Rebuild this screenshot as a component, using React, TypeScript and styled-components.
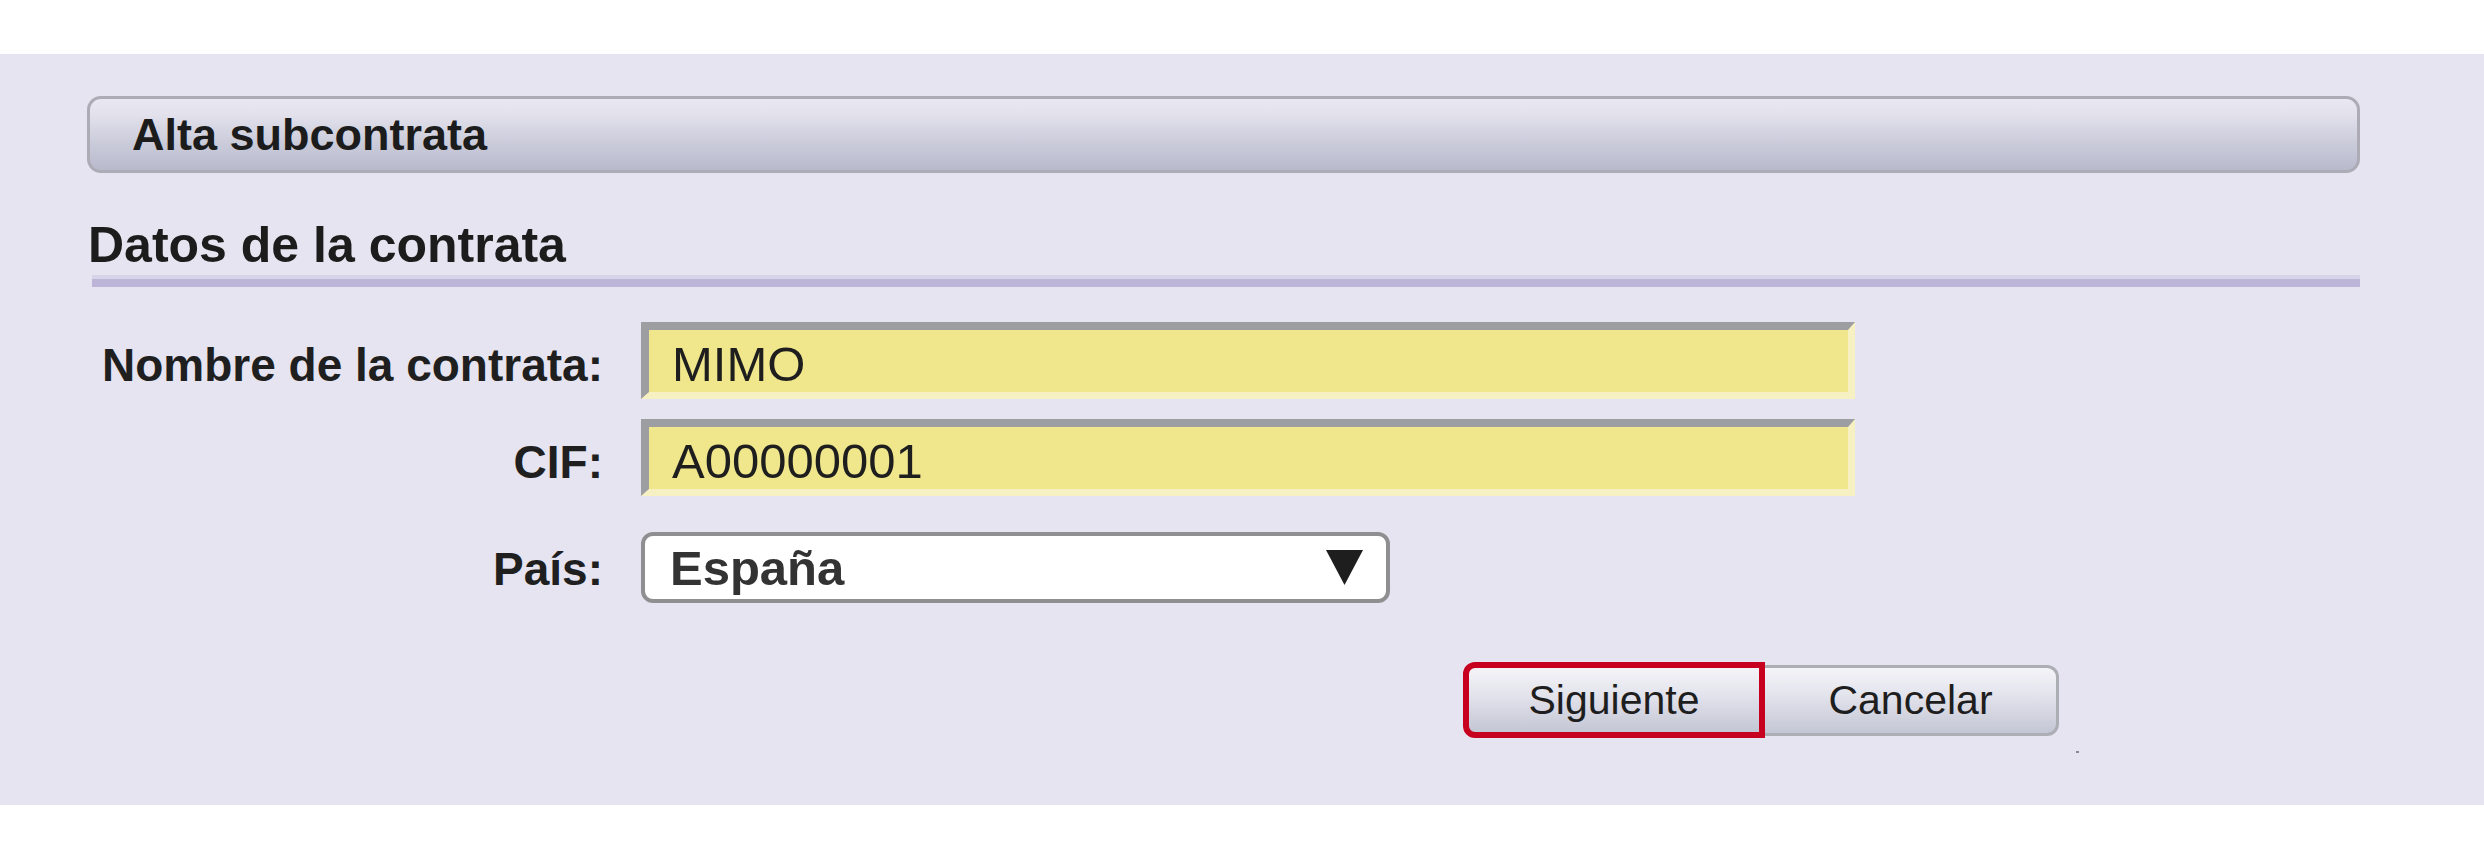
import React from 'react';
import styled, { createGlobalStyle } from 'styled-components';

const GlobalStyle = createGlobalStyle`
  html, body {
    margin: 0;
    padding: 0;
    background: #ffffff;
  }

  body {
    font-family: 'Liberation Sans', Arial, sans-serif;
    color: #1e1e1e;
  }
`;

const Page = styled.div`
  width: 2484px;
  padding-top: 54px;
`;

const Panel = styled.section`
  box-sizing: border-box;
  height: 751px;
  padding: 42px 124px 0 87px;
  background: #e5e4f0;
`;

const TitleBar = styled.div`
  box-sizing: border-box;
  height: 77px;
  padding: 1px 0 0 42px;
  border: 3px solid #adacb6;
  border-radius: 14px;
  background: linear-gradient(#e9e8f2 0%, #e2e1ec 22%, #c9cad9 65%, #b8b9cc 100%);
  font-size: 45px;
  font-weight: 700;
  line-height: 70px;
  color: #1c1c1c;
`;

const SectionHeading = styled.h2`
  margin: 44px 0 0;
  padding-left: 1px;
  height: 56px;
  font-size: 50px;
  font-weight: 700;
  line-height: 56px;
  color: #1c1c1c;
`;

const SectionRule = styled.div`
  margin: 2px 0 0 5px;
  height: 8px;
  border-top: 4px solid #d7d4e9;
  background: #bdb5d8;
`;

const Form = styled.div`
  margin-top: 35px;
`;

const FieldRow = styled.div<{ $spaceBefore: number }>`
  display: grid;
  grid-template-columns: 516px auto;
  column-gap: 38px;
  align-items: baseline;
  margin-top: ${({ $spaceBefore }) => $spaceBefore}px;
`;

const Label = styled.label`
  text-align: right;
  font-size: 46px;
  font-weight: 700;
  line-height: 53px;
  color: #1f1f1f;
`;

const TextBox = styled.div`
  box-sizing: border-box;
  width: 1214px;
  height: 77px;
  padding: 7px 0 0 23px;
  border-style: solid;
  border-width: 8px 7px 7px 8px;
  border-color: #9d9ea2 #f6f0c3 #f6f0c3 #9d9ea2;
  background: #f0e68c;
  font-size: 49px;
  line-height: 55px;
  color: #1e1e1e;
`;

const Select = styled.div`
  box-sizing: border-box;
  width: 749px;
  height: 71px;
  padding: 2px 23px 0 25px;
  display: flex;
  align-items: center;
  justify-content: space-between;
  border: 4px solid #8f8f91;
  border-radius: 12px;
  background: #ffffff;
`;

const SelectValue = styled.span`
  font-size: 49px;
  font-weight: 700;
  line-height: 61px;
  color: #333333;
`;

const Arrow = styled.svg`
  display: block;
  width: 37px;
  height: 35px;
  margin-top: -2px;
`;

const ButtonRow = styled.div`
  display: flex;
  align-items: center;
  margin-top: 59px;
  padding-left: 1376px;
`;

const Button = styled.button<{ $primary?: boolean }>`
  box-sizing: border-box;
  margin: 0;
  padding: 0;
  width: ${({ $primary }) => ($primary ? '302px' : '294px')};
  height: ${({ $primary }) => ($primary ? '76px' : '71px')};
  border: ${({ $primary }) => ($primary ? '6px solid #c8001f' : '3px solid #adadb4')};
  border-left-width: ${({ $primary }) => ($primary ? '6px' : '0')};
  border-radius: ${({ $primary }) => ($primary ? '12px 0 0 12px' : '0 12px 12px 0')};
  background: linear-gradient(#f4f4f8 0%, #e4e4ed 40%, #c3c6d4 100%);
  font-family: 'Liberation Sans', Arial, sans-serif;
  font-size: 41px;
  line-height: 64px;
  color: #1e1e1e;
  cursor: pointer;
`;

const Speck = styled.span`
  align-self: flex-end;
  width: 3px;
  height: 2px;
  margin: 0 0 -15px 17px;
  background: #8a8a90;
`;

const fields = [
  { label: 'Nombre de la contrata:', value: 'MIMO', space: 0 },
  { label: 'CIF:', value: 'A00000001', space: 20 },
];

const App: React.FC = () => {
  return (
    <>
      <GlobalStyle />
      <Page>
        <Panel>
          <TitleBar>Alta subcontrata</TitleBar>

          <SectionHeading>Datos de la contrata</SectionHeading>
          <SectionRule />

          <Form>
            {fields.map((field) => (
              <FieldRow key={field.label} $spaceBefore={field.space}>
                <Label>{field.label}</Label>
                <TextBox>{field.value}</TextBox>
              </FieldRow>
            ))}

            <FieldRow $spaceBefore={36}>
              <Label>País:</Label>
              <Select>
                <SelectValue>España</SelectValue>
                <Arrow viewBox="0 0 37 35" aria-hidden="true">
                  <polygon points="0,0 37,0 18.5,35" fill="#1e1e1e" />
                </Arrow>
              </Select>
            </FieldRow>
          </Form>

          <ButtonRow>
            <Button $primary>Siguiente</Button>
            <Button>Cancelar</Button>
            <Speck />
          </ButtonRow>
        </Panel>
      </Page>
    </>
  );
};

export default App;
